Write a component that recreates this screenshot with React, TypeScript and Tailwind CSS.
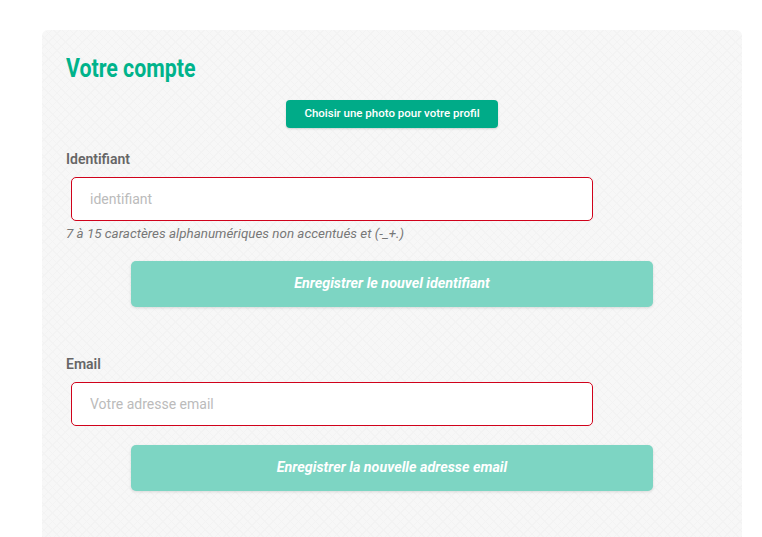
export default function App() {
  return (
    <div className="min-h-screen bg-white pt-[30px] pl-[42px]" style={{ fontFamily: 'Roboto, "Liberation Sans", sans-serif' }}>
      <div className="w-[700px] min-h-[507px] rounded-t-[6px] bg-[#f7f7f7] bg-[repeating-linear-gradient(45deg,#f3f3f3_0px,#f3f3f3_1px,transparent_1px,transparent_6px),repeating-linear-gradient(-45deg,#f3f3f3_0px,#f3f3f3_1px,transparent_1px,transparent_6px)] px-[24px] pt-[21px] pb-[40px]">
        {/* Title */}
        <h1 className="origin-left scale-x-[0.82] text-[26px] leading-[34px] font-bold text-[#00b38b]">Votre compte</h1>

        {/* Photo */}
        <div className="mt-[15px] flex justify-center">
          <button className="h-[28px] w-[212px] rounded-[4px] bg-[#00ab88] text-[11.5px] font-medium text-white shadow-[0_1px_2px_rgba(0,0,0,0.15)]">
            Choisir une photo pour votre profil
          </button>
        </div>

        {/* Identifiant */}
        <label className="mt-[21px] block text-[14px] leading-[20px] font-semibold text-[#666]">Identifiant</label>
        <input
          placeholder="identifiant"
          className="mt-[8px] ml-[5px] block h-[44px] w-[522px] rounded-[5px] border border-[#d0021b] bg-white px-[18px] text-[14px] text-[#333] outline-none placeholder:text-[#bbb]"
        />
        <p className="mt-[4px] text-[13.4px] leading-[18px] italic text-[#777]">7 à 15 caractères alphanumériques non accentués et (-_+.)</p>
        <div className="mt-[18px] flex justify-center">
          <button className="h-[46px] w-[522px] rounded-[5px] bg-[#7dd5c3] text-[14.3px] font-bold italic text-white shadow-[0_1px_3px_rgba(0,0,0,0.12)]">
            Enregistrer le nouvel identifiant
          </button>
        </div>

        {/* Email */}
        <label className="mt-[47px] block text-[14px] leading-[20px] font-semibold text-[#666]">Email</label>
        <input
          placeholder="Votre adresse email"
          className="mt-[8px] ml-[5px] block h-[44px] w-[522px] rounded-[5px] border border-[#d0021b] bg-white px-[18px] text-[14px] text-[#333] outline-none placeholder:text-[#bbb]"
        />
        <div className="mt-[19px] flex justify-center">
          <button className="h-[46px] w-[522px] rounded-[5px] bg-[#7dd5c3] text-[14.3px] font-bold italic text-white shadow-[0_1px_3px_rgba(0,0,0,0.12)]">
            Enregistrer la nouvelle adresse email
          </button>
        </div>
      </div>
    </div>
  );
}
